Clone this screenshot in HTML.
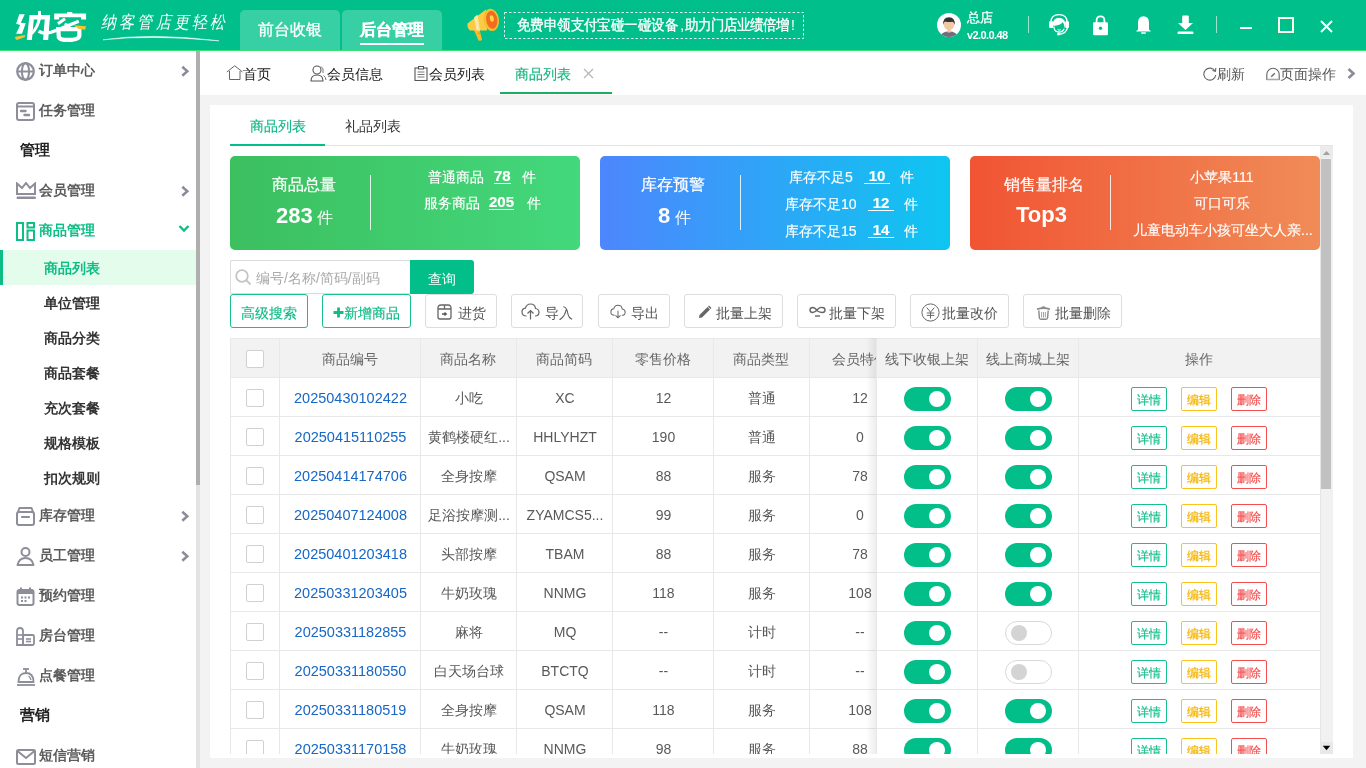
<!DOCTYPE html>
<html><head><meta charset="utf-8">
<style>
*{box-sizing:border-box;margin:0;padding:0}
html,body{width:1366px;height:768px;overflow:hidden;background:#f3f3f3;font-family:"Liberation Sans",sans-serif;color:#333}
.a{position:absolute}
#hdr{position:absolute;left:0;top:0;width:1366px;height:51px;background:#01bf8b;border-bottom:1px solid #3be07a}
.htab{position:absolute;top:10px;height:40px;width:100px;background:#37d0a4;border-radius:5px 5px 0 0;color:#fff;font-size:16px;text-align:center;line-height:40px;-webkit-text-stroke:0.3px #fff}
#side{position:absolute;left:0;top:51px;width:196px;height:717px;background:#fff;overflow:hidden}
#sbar{position:absolute;left:196px;top:51px;width:4px;height:717px;background:#afafaf}
.mt{font-size:14px;font-weight:bold;line-height:20px;white-space:nowrap}
.mh{font-size:15px;font-weight:bold;color:#222;line-height:22px}
#tabs{position:absolute;left:200px;top:51px;width:1166px;height:44px;background:#fff}
.tt{position:absolute;top:13px;line-height:20px;font-size:14px;color:#1a1a1a;white-space:nowrap}
#panel{position:absolute;left:210px;top:105px;width:1143px;height:653px;background:#fff;overflow:hidden}
.card{position:absolute;top:156px;width:350px;height:94px;border-radius:5px;color:#fff}
.ct{position:absolute;font-size:16px;line-height:20px;white-space:nowrap;-webkit-text-stroke:0.2px #fff}
.cs{position:absolute;font-size:14px;line-height:18px;white-space:nowrap;-webkit-text-stroke:0.15px #fff}
.cn{font-weight:bold;font-size:15px;display:inline-block;border-bottom:1.5px solid #fff;line-height:15px;text-align:center}
.btn{position:absolute;top:294px;height:34px;border:1px solid #ddd;border-radius:3px;font-size:14px;color:#555;line-height:32px;padding-top:2px;white-space:nowrap}
.btng{border-color:#17bf8c;color:#0fba86;-webkit-text-stroke:0.15px #0fba86}
.th{font-size:14px;color:#666;text-align:center;line-height:20px;white-space:nowrap}
.td{font-size:14px;color:#595959;text-align:center;line-height:20px;white-space:nowrap}
.lnk{color:#1667c6;font-size:14.5px}
.cb{width:18px;height:18px;border:1px solid #d0d0d0;border-radius:2px;background:#fff}
.tg{width:47px;height:24px;border-radius:12px;background:#02bf8a}
.tg i{position:absolute;left:25px;top:4px;width:16px;height:16px;border-radius:8px;background:#fff}
.tg.off{background:#fff;border:1px solid #d9d9d9}
.tg.off i{left:5px;top:3px;background:#d4d4d4}
.ab{width:36px;height:24px;border:1px solid;border-radius:2px;font-size:12px;text-align:center;line-height:23px;padding-top:1px;background:#fff;-webkit-text-stroke:0.2px currentColor}
</style></head><body><div id="root" style="position:absolute;left:0;top:0;width:1366px;height:768px;will-change:transform">
<div id="hdr">
  <svg class="a" style="left:0;top:0" width="100" height="50" viewBox="0 0 100 50">
    <g fill="#fff">
      <polygon points="19.32,14.15 24.77,14.15 20.78,22.64 25.76,23.34 21.96,33.77 16.10,33.77 20.20,24.98 16.10,23.81"/>
      <polygon points="29.57,15.03 50.07,15.03 50.07,19.42 33.79,19.42 31.91,39.92 26.76,39.92"/>
      <rect x="38.06" y="10.93" width="2.93" height="8.78"/>
      <polygon points="45.09,15.03 50.07,15.03 48.19,39.92 43.04,39.92"/>
      <polygon points="54.17,13.39 86.08,13.39 86.08,19.42 81.11,19.42 81.11,17.37 59.14,17.37 59.14,19.42 54.17,19.42"/>
      <rect x="67.05" y="11.98" width="5.27" height="2.34"/>
    </g>
    <g fill="none" stroke="#fff">
      <path d="M39.53 17.96 Q37.77 27.33 31.62 33.77" stroke-width="3"/>
      <path d="M38.65 31.13 Q44.80 35.53 56.51 30.25 L78.76 21.18" stroke-width="3.3"/>
      <path d="M57.97 23.81 L65.00 18.83" stroke-width="3"/>
      <path d="M58.27 29.08 L58.85 37.28 Q60.02 39.92 68.22 39.92 Q79.35 39.92 79.35 35.53 L79.35 29.08 Z" stroke-width="4.2"/>
      <path d="M64.71 23.81 L70.57 26.16" stroke-width="2.5"/>
    </g>
    <g fill="#fbc02d">
      <polygon points="15.22,36.70 25.47,34.94 24.59,37.28 16.69,39.92 15.22,38.45"/>
      <polygon points="73.49,25.28 86.08,26.16 85.21,29.79 78.76,29.08"/>
    </g>
  </svg>
  <div class="a" style="left:101px;top:11px;font-size:15px;color:#fff;line-height:20px;letter-spacing:3.2px;font-style:italic;font-family:'Liberation Serif',serif;white-space:nowrap;transform:scaleY(1.15);transform-origin:0 0">纳客管店更轻松</div>
  <svg class="a" style="left:100px;top:30px" width="125" height="14" viewBox="0 0 125 14"><path d="M3 9.8 Q50 2.5 119 10.8 Q50 4.6 3 9.8 Z" fill="#fff" stroke="#fff" stroke-width="0.5"/></svg>
  <div class="htab" style="left:240px">前台收银</div>
  <div class="htab" style="left:342px;font-weight:bold">后台管理<div class="a" style="left:18px;top:33px;width:64px;height:2px;background:#fff"></div></div>
  <svg class="a" style="left:460px;top:5px" width="45" height="40" viewBox="460 5 45 40">
    <path d="M473.5 29 L479.5 29.5 L482 39.5 Q481 41.5 478.5 40.5 Z" fill="#f8b92a"/>
    <path d="M478 33 L480.5 33.5" stroke="#f08a28" stroke-width="1"/>
    <path d="M467.5 23.5 Q467 28 470 30.5 L487 30.5 L486 9.5 Z" fill="#fbcb45"/>
    <path d="M474 17.5 L477.5 14.5 L480 30.5 L476.5 30.5 Z" fill="#fde7a6"/>
    <ellipse cx="491.3" cy="19.8" rx="7.6" ry="11.2" transform="rotate(-8 491.3 19.8)" fill="#f8bd2e"/>
    <ellipse cx="491.8" cy="19.8" rx="5.6" ry="9" transform="rotate(-8 491.8 19.8)" fill="#f46b1f"/>
    <ellipse cx="491.8" cy="18.5" rx="2" ry="3.2" transform="rotate(-8 491.8 18.5)" fill="#fcd54e"/>
  </svg>
  <svg class="a" style="left:504px;top:12px" width="300" height="27"><rect x="0.5" y="0.5" width="299" height="26" fill="none" stroke="rgba(255,255,255,0.85)" stroke-width="1" stroke-dasharray="2.5 2"/></svg>
  <div class="a" style="left:517px;top:15px;font-size:15px;color:#fff;line-height:20px;white-space:nowrap;letter-spacing:-0.1px;transform:scaleX(0.9);transform-origin:0 0;-webkit-text-stroke:0.35px #fff">免费申领支付宝碰一碰设备</div>
  <div class="a" style="left:680px;top:15px;font-size:15px;color:#fff;line-height:20px">,</div>
  <div class="a" style="left:685px;top:15px;font-size:15px;color:#fff;line-height:20px;white-space:nowrap;letter-spacing:-0.5px;transform:scaleX(0.9);transform-origin:0 0;-webkit-text-stroke:0.35px #fff">助力门店业绩倍增</div>
  <div class="a" style="left:791px;top:15px;font-size:14px;color:#fff;line-height:20px">!</div>
  <!-- avatar -->
  <svg class="a" style="left:937px;top:13px" width="24" height="24" viewBox="0 0 24 24">
    <circle cx="12" cy="12" r="12" fill="#fff"/>
    <clipPath id="cc"><circle cx="12" cy="12" r="12"/></clipPath>
    <g clip-path="url(#cc)">
      <path d="M2.5 26 Q3 18.5 12 18.5 Q21 18.5 21.5 26 Z" fill="#6e6e7e"/>
      <rect x="10.3" y="15" width="3.4" height="4.5" fill="#f2c49e"/>
      <ellipse cx="12" cy="11.8" rx="5.2" ry="5.2" fill="#f4c8a4"/>
      <path d="M6.3 12 Q5.5 4.3 12 4.3 Q18.3 4.3 17.7 12 Q17 9 15.5 8.8 Q12 9.5 8 8.6 Q6.8 9.5 6.3 12 Z" fill="#333"/>
    </g>
  </svg>
  <div class="a" style="left:967px;top:10px;font-size:13px;color:#fff;line-height:16px;-webkit-text-stroke:0.3px #fff">总店</div>
  <div class="a" style="left:967px;top:28px;font-size:11px;color:#fff;line-height:14px;font-weight:bold;letter-spacing:-0.6px">v2.0.0.48</div>
  <div class="a" style="left:1028px;top:16px;width:1px;height:17px;background:rgba(255,255,255,0.6)"></div>
  <!-- headset -->
  <svg class="a" style="left:1040px;top:8px" width="40" height="34" viewBox="1040 8 40 34">
    <path d="M1050.84 22.60 Q1050.84 14.64 1059.03 14.64 Q1067.21 14.64 1067.21 22.60" fill="none" stroke="#fff" stroke-width="1.4"/>
    <rect x="1049.07" y="21.27" width="4.20" height="6.64" rx="1" fill="#fff"/>
    <rect x="1065.22" y="21.27" width="3.76" height="6.64" rx="1" fill="#fff"/>
    <path d="M1052.83 23.93 Q1053.27 17.96 1059.03 17.96 Q1064.78 17.96 1065.44 23.93 L1064.78 28.80 Q1064.12 22.60 1062.35 22.16 Q1061.24 24.81 1054.60 25.70 Q1053.94 26.58 1054.16 27.47 Z" fill="#fff"/>
    <path d="M1053.94 27.03 Q1054.16 31.89 1059.03 32.12 Q1063.01 31.89 1064.12 28.80" fill="none" stroke="#fff" stroke-width="1.3"/>
    <path d="M1057.70 29.68 Q1059.03 30.57 1060.80 29.68" fill="none" stroke="#fff" stroke-width="1"/>
    <path d="M1067.43 27.47 Q1066.55 33.66 1059.03 34.33" fill="none" stroke="#fff" stroke-width="1.4"/>
    <circle cx="1058.58" cy="34.19" r="1.4" fill="#fff"/>
  </svg>
  <!-- lock -->
  <svg class="a" style="left:1092px;top:15px" width="17" height="21" viewBox="0 0 17 21">
    <path d="M4.6 8 L4.6 5.2 Q4.6 1.3 8.5 1.3 Q12.4 1.3 12.4 5.2 L12.4 8" fill="none" stroke="#fff" stroke-width="1.8"/>
    <rect x="1" y="7.2" width="15" height="13" rx="1.3" fill="#fff"/>
    <circle cx="8.5" cy="13.3" r="1.7" fill="#01bf8b"/>
  </svg>
  <!-- bell -->
  <svg class="a" style="left:1135px;top:15px" width="17" height="20" viewBox="0 0 17 20">
    <path d="M3 14.5 L3 8 Q3 1.2 8.5 1.2 Q14 1.2 14 8 L14 14.5 L16 16.6 L1 16.6 Z" fill="#fff"/>
    <rect x="6" y="17.2" width="5" height="1.6" rx="0.8" fill="#fff"/>
  </svg>
  <!-- download -->
  <svg class="a" style="left:1177px;top:15px" width="17" height="20" viewBox="0 0 17 20">
    <rect x="5.2" y="0.5" width="6.6" height="8" rx="1" fill="#fff"/>
    <path d="M1 8 L16 8 L8.5 15 Z" fill="#fff"/>
    <rect x="0.5" y="16.5" width="16" height="2.6" rx="1.2" fill="#fff"/>
  </svg>
  <div class="a" style="left:1216px;top:16px;width:1px;height:17px;background:rgba(255,255,255,0.6)"></div>
  <div class="a" style="left:1240px;top:27px;width:12px;height:2px;background:#fff"></div>
  <div class="a" style="left:1278px;top:17px;width:16px;height:16px;border:2.5px solid #fdfde8"></div>
  <svg class="a" style="left:1320px;top:20px" width="13" height="13" viewBox="0 0 13 13"><path d="M1 1 L12 12 M12 1 L1 12" stroke="#fff" stroke-width="2"/></svg>
</div>

<div id="side">
<svg class="a" style="left:16px;top:11px" width="20" height="20" viewBox="0 0 20 20"><circle cx="9.5" cy="9.5" r="8.3" fill="none" stroke="#8e8e9b" stroke-width="2.2"/><ellipse cx="9.5" cy="9.5" rx="3.6" ry="8.3" fill="none" stroke="#8e8e9b" stroke-width="2"/><line x1="1.5" y1="9.5" x2="17.5" y2="9.5" stroke="#8e8e9b" stroke-width="2"/></svg>
<div class="a mt" style="left:39px;top:9px;color:#5c5c5c">订单中心</div>
<svg class="a" style="left:179px;top:12px" width="12" height="16" viewBox="0 0 12 16"><path d="M3.3 3.8 L8.3 8.3 L3.3 12.8" fill="none" stroke="#8b8b99" stroke-width="2.5"/></svg>
<svg class="a" style="left:16px;top:51px" width="20" height="20" viewBox="0 0 20 20"><rect x="1" y="1" width="17" height="17" rx="2" fill="none" stroke="#8e8e9b" stroke-width="2"/><line x1="1" y1="4.5" x2="18" y2="4.5" stroke="#8e8e9b" stroke-width="2"/><line x1="5" y1="9" x2="9.5" y2="9" stroke="#8e8e9b" stroke-width="2.4" stroke-linecap="round"/><line x1="8.5" y1="13" x2="13" y2="13" stroke="#8e8e9b" stroke-width="2.4" stroke-linecap="round"/></svg>
<div class="a mt" style="left:39px;top:49px;color:#5c5c5c">任务管理</div>
<svg class="a" style="left:16px;top:131px" width="20" height="20" viewBox="0 0 20 20"><path d="M1 12 L1 1.5 L6 6 L10 1 L14 6 L19 1.5 L19 12 Z" fill="none" stroke="#8e8e9b" stroke-width="2" stroke-linejoin="miter"/><rect x="0.5" y="14.5" width="19.5" height="2.6" rx="1.3" fill="#8e8e9b"/></svg>
<div class="a mt" style="left:39px;top:129px;color:#5c5c5c">会员管理</div>
<svg class="a" style="left:179px;top:132px" width="12" height="16" viewBox="0 0 12 16"><path d="M3.3 3.8 L8.3 8.3 L3.3 12.8" fill="none" stroke="#8b8b99" stroke-width="2.5"/></svg>
<svg class="a" style="left:16px;top:171px" width="20" height="20" viewBox="0 0 20 20"><rect x="1" y="1" width="6" height="17" fill="none" stroke="#0fbd86" stroke-width="2"/><rect x="11.5" y="1" width="6.5" height="4.5" fill="none" stroke="#0fbd86" stroke-width="2"/><rect x="11.5" y="8.5" width="6.5" height="9.5" fill="none" stroke="#0fbd86" stroke-width="2"/></svg>
<div class="a mt" style="left:39px;top:169px;color:#0fbd86">商品管理</div>
<svg class="a" style="left:16px;top:456px" width="20" height="20" viewBox="0 0 20 20"><path d="M2 5 L3.5 1 L15.5 1 L17 5 Z" fill="none" stroke="#8e8e9b" stroke-width="2" stroke-linejoin="round"/><rect x="1" y="5" width="17" height="13" rx="2" fill="none" stroke="#8e8e9b" stroke-width="2"/><line x1="6" y1="10" x2="13" y2="10" stroke="#8e8e9b" stroke-width="2.2" stroke-linecap="round"/></svg>
<div class="a mt" style="left:39px;top:454px;color:#5c5c5c">库存管理</div>
<svg class="a" style="left:179px;top:457px" width="12" height="16" viewBox="0 0 12 16"><path d="M3.3 3.8 L8.3 8.3 L3.3 12.8" fill="none" stroke="#8b8b99" stroke-width="2.5"/></svg>
<svg class="a" style="left:16px;top:496px" width="20" height="20" viewBox="0 0 20 20"><circle cx="9.5" cy="5" r="4" fill="none" stroke="#8e8e9b" stroke-width="2"/><path d="M1.5 18 Q3 11 9.5 11 Q16 11 17.5 18 Z" fill="none" stroke="#8e8e9b" stroke-width="2" stroke-linejoin="round"/></svg>
<div class="a mt" style="left:39px;top:494px;color:#5c5c5c">员工管理</div>
<svg class="a" style="left:179px;top:497px" width="12" height="16" viewBox="0 0 12 16"><path d="M3.3 3.8 L8.3 8.3 L3.3 12.8" fill="none" stroke="#8b8b99" stroke-width="2.5"/></svg>
<svg class="a" style="left:16px;top:536px" width="20" height="20" viewBox="0 0 20 20"><rect x="1.5" y="3" width="16" height="15" rx="2" fill="none" stroke="#8e8e9b" stroke-width="2"/><rect x="1.5" y="3" width="16" height="4" fill="#8e8e9b"/><line x1="5" y1="0.5" x2="5" y2="4" stroke="#8e8e9b" stroke-width="2"/><line x1="14" y1="0.5" x2="14" y2="4" stroke="#8e8e9b" stroke-width="2"/><g fill="#8e8e9b"><rect x="5" y="9.5" width="2" height="2"/><rect x="8.5" y="9.5" width="2" height="2"/><rect x="12" y="9.5" width="2" height="2"/><rect x="5" y="13" width="2" height="2"/><rect x="8.5" y="13" width="2" height="2"/></g></svg>
<div class="a mt" style="left:39px;top:534px;color:#5c5c5c">预约管理</div>
<svg class="a" style="left:16px;top:576px" width="20" height="20" viewBox="0 0 20 20"><path d="M1 18 L1 4 Q1 1 4 1 Q7 1 7 4 L7 18 Z" fill="none" stroke="#8e8e9b" stroke-width="1.8"/><line x1="1" y1="8" x2="7" y2="8" stroke="#8e8e9b" stroke-width="1.6"/><line x1="1" y1="12" x2="7" y2="12" stroke="#8e8e9b" stroke-width="1.6"/><rect x="7" y="8" width="11" height="10" rx="1.5" fill="none" stroke="#8e8e9b" stroke-width="1.8"/><line x1="10" y1="12" x2="15" y2="12" stroke="#8e8e9b" stroke-width="1.6"/><line x1="10" y1="14.5" x2="15" y2="14.5" stroke="#8e8e9b" stroke-width="1.6"/></svg>
<div class="a mt" style="left:39px;top:574px;color:#5c5c5c">房台管理</div>
<svg class="a" style="left:16px;top:616px" width="20" height="20" viewBox="0 0 20 20"><path d="M2.5 15 Q2.5 6 10 6 Q17.5 6 17.5 15 Z" fill="none" stroke="#8e8e9b" stroke-width="1.8"/><line x1="7" y1="2" x2="13" y2="2" stroke="#8e8e9b" stroke-width="1.8"/><line x1="10" y1="2" x2="10" y2="6" stroke="#8e8e9b" stroke-width="1.8"/><line x1="1" y1="18" x2="19" y2="18" stroke="#8e8e9b" stroke-width="1.8"/><path d="M12.5 9 Q14.5 10.5 15 13" fill="none" stroke="#8e8e9b" stroke-width="1.4"/></svg>
<div class="a mt" style="left:39px;top:614px;color:#5c5c5c">点餐管理</div>
<svg class="a" style="left:16px;top:696px" width="20" height="20" viewBox="0 0 20 20"><rect x="1" y="3" width="18" height="14" rx="1.5" fill="none" stroke="#8e8e9b" stroke-width="2"/><path d="M1.5 4 L10 11 L18.5 4" fill="none" stroke="#8e8e9b" stroke-width="2"/></svg>
<div class="a mt" style="left:39px;top:694px;color:#5c5c5c">短信营销</div>
<svg class="a" style="left:178px;top:173px" width="12" height="9" viewBox="0 0 12 9"><path d="M1.5 2 L6 6.5 L10.5 2" fill="none" stroke="#0fbd86" stroke-width="2.4"/></svg>
<div class="a mh" style="left:20px;top:88px">管理</div>
<div class="a mh" style="left:20px;top:653px">营销</div>
<div class="a" style="left:0;top:199px;width:196px;height:35px;background:#e3fcec"></div>
<div class="a" style="left:0;top:199px;width:3px;height:35px;background:#0dbd86"></div>
<div class="a mt" style="left:44px;top:207px;color:#0fbd86">商品列表</div>
<div class="a mt" style="left:44px;top:242px;color:#333">单位管理</div>
<div class="a mt" style="left:44px;top:277px;color:#333">商品分类</div>
<div class="a mt" style="left:44px;top:312px;color:#333">商品套餐</div>
<div class="a mt" style="left:44px;top:347px;color:#333">充次套餐</div>
<div class="a mt" style="left:44px;top:382px;color:#333">规格模板</div>
<div class="a mt" style="left:44px;top:417px;color:#333">扣次规则</div>
</div>
<div id="sbar"></div><div class="a" style="left:196px;top:485px;width:4px;height:283px;background:#e3e3e3"></div>

<div id="tabs">
  <svg class="a" style="left:26px;top:14px" width="17" height="16" viewBox="0 0 17 16"><path d="M0.8 7 L8.7 0.8 L16.6 7 M3.5 6 V14.5 H14 V6" fill="none" stroke="#666" stroke-width="1"/></svg>
  <div class="tt" style="left:43px">首页</div>
  <svg class="a" style="left:110px;top:14px" width="17" height="17" viewBox="0 0 17 17"><circle cx="7" cy="5" r="4" fill="none" stroke="#555" stroke-width="1.1"/><path d="M1 16 Q1 10 7 10 Q13 10 13 16 Z" fill="none" stroke="#555" stroke-width="1.1"/><path d="M11 1.5 Q14 3 13 8 M13.5 10.5 Q16 12 16 15" fill="none" stroke="#777" stroke-width="1"/></svg>
  <div class="tt" style="left:127px">会员信息</div>
  <svg class="a" style="left:214px;top:15px" width="14" height="15" viewBox="0 0 14 15"><rect x="1" y="2" width="12" height="12.5" fill="none" stroke="#555" stroke-width="1.1"/><rect x="4.5" y="0.5" width="5" height="2.5" fill="#fff" stroke="#555" stroke-width="1"/><path d="M3.5 6 H10.5 M3.5 8.5 H10.5 M3.5 11 H10.5" stroke="#777" stroke-width="1"/></svg>
  <div class="tt" style="left:229px">会员列表</div>
  <div class="tt" style="left:315px;color:#14b47e;-webkit-text-stroke:0.15px #14b47e">商品列表</div>
  <svg class="a" style="left:383px;top:17px" width="11" height="11" viewBox="0 0 11 11"><path d="M1 1 L10 10 M10 1 L1 10" stroke="#b5b5b5" stroke-width="1.2"/></svg>
  <div class="a" style="left:300px;top:41px;width:112px;height:2px;background:#1dad62"></div>
  <svg class="a" style="left:1003px;top:16px" width="14" height="14" viewBox="0 0 14 14"><path d="M12 4 A6 6 0 1 0 12.8 8" fill="none" stroke="#666" stroke-width="1.1"/><path d="M9.5 3.5 L12.5 4.2 L12.8 1" fill="none" stroke="#666" stroke-width="1.1"/></svg>
  <div class="tt" style="left:1017px;color:#555">刷新</div>
  <svg class="a" style="left:1066px;top:16px" width="14" height="14" viewBox="0 0 14 14"><path d="M0.8 12.5 L0.8 7.5 A6.2 6.2 0 0 1 13.2 7.5 L13.2 12.5 Z" fill="none" stroke="#666" stroke-width="1.1"/><path d="M0.8 12.5 H13.2" stroke="#aaa" stroke-width="1.6"/><path d="M5.2 9.8 L8.8 6.2" stroke="#666" stroke-width="1.3"/></svg>
  <div class="tt" style="left:1080px;color:#555">页面操作</div>
  <svg class="a" style="left:1147px;top:17px" width="9" height="11" viewBox="0 0 9 11"><path d="M1.5 1 L6.5 5.5 L1.5 10" fill="none" stroke="#8b8b99" stroke-width="2.6"/></svg>
</div>

<div id="panel"></div>
<!-- inner tabs -->
<div class="a" style="left:250px;top:116px;font-size:14px;color:#0fb886;line-height:20px;-webkit-text-stroke:0.15px #0fb886">商品列表</div>
<div class="a" style="left:345px;top:116px;font-size:14px;color:#333;line-height:20px">礼品列表</div>
<div class="a" style="left:230px;top:145px;width:1103px;height:1px;background:#e4e4e4"></div>
<div class="a" style="left:230px;top:144px;width:95px;height:2px;background:#02bf8a"></div>

<!-- cards -->
<div class="card" style="left:230px;background:linear-gradient(to right,#3cbf5f,#43d87c)">
  <div class="ct" style="left:42px;top:19px">商品总量</div>
  <div class="a" style="left:46px;top:47px;white-space:nowrap;line-height:26px"><b style="font-size:22px">283</b> <span style="font-size:16px">件</span></div>
  <div class="a" style="left:140px;top:19px;width:1px;height:55px;background:rgba(255,255,255,0.85)"></div>
  <div class="cs" style="left:198px;top:12px">普通商品</div>
  <div class="cs" style="left:264px;top:11px"><span class="cn">78</span></div>
  <div class="cs" style="left:292px;top:12px">件</div>
  <div class="cs" style="left:194px;top:38px">服务商品</div>
  <div class="cs" style="left:259px;top:37px"><span class="cn">205</span></div>
  <div class="cs" style="left:297px;top:38px">件</div>
</div>
<div class="card" style="left:600px;background:linear-gradient(to right,#4d86fd,#0ec6f0)">
  <div class="ct" style="left:41px;top:19px">库存预警</div>
  <div class="a" style="left:58px;top:47px;white-space:nowrap;line-height:26px"><b style="font-size:22px">8</b> <span style="font-size:16px">件</span></div>
  <div class="a" style="left:140px;top:19px;width:1px;height:55px;background:rgba(255,255,255,0.85)"></div>
  <div class="cs" style="left:189px;top:12px">库存不足5</div>
  <div class="cs" style="left:264px;top:11px"><span class="cn" style="width:26px">10</span></div>
  <div class="cs" style="left:300px;top:12px">件</div>
  <div class="cs" style="left:185px;top:39px">库存不足10</div>
  <div class="cs" style="left:268px;top:38px"><span class="cn" style="width:26px">12</span></div>
  <div class="cs" style="left:304px;top:39px">件</div>
  <div class="cs" style="left:185px;top:66px">库存不足15</div>
  <div class="cs" style="left:268px;top:65px"><span class="cn" style="width:26px">14</span></div>
  <div class="cs" style="left:304px;top:66px">件</div>
</div>
<div class="card" style="left:970px;background:linear-gradient(to right,#f15433,#f08c58)">
  <div class="ct" style="left:34px;top:19px">销售量排名</div>
  <div class="a" style="left:46px;top:46px;white-space:nowrap;line-height:26px;font-size:22px;font-weight:bold">Top3</div>
  <div class="a" style="left:140px;top:19px;width:1px;height:55px;background:rgba(255,255,255,0.85)"></div>
  <div class="cs" style="left:0;width:350px;padding-left:154px;text-align:center;top:12px">小苹果111</div>
  <div class="cs" style="left:0;width:350px;padding-left:154px;text-align:center;top:38px">可口可乐</div>
  <div class="cs" style="left:163px;top:65px">儿童电动车小孩可坐大人亲...</div>
</div>

<!-- search -->
<div class="a" style="left:230px;top:260px;width:181px;height:34px;border:1px solid #dcdcdc;border-right:none;border-radius:2px 0 0 2px;background:#fff"></div>
<svg class="a" style="left:235px;top:269px" width="17" height="17" viewBox="0 0 17 17"><circle cx="7" cy="7" r="5.8" fill="none" stroke="#c4c4c4" stroke-width="1.8"/><path d="M11.2 11.2 L15.5 15.5" stroke="#c4c4c4" stroke-width="1.8"/></svg>
<div class="a" style="left:256px;top:268px;font-size:14px;color:#aaa;line-height:20px;white-space:nowrap">编号/名称/简码/副码</div>
<div class="a" style="left:410px;top:260px;width:64px;height:34px;background:#02bf8a;border-radius:0 3px 3px 0;color:#fff;font-size:14px;text-align:center;line-height:34px;padding-top:2px">查询</div>

<!-- buttons -->
<div class="btn btng" style="left:230px;width:78px;text-align:center">高级搜索</div>
<div class="btn btng" style="left:322px;width:89px;padding-left:21px">新增商品<svg class="a" style="left:10px;top:12px" width="11" height="11" viewBox="0 0 11 11"><path d="M0.5 5.5 H10.5 M5.5 0.5 V10.5" stroke="#0fbd86" stroke-width="2.8"/></svg></div>
<div class="btn" style="left:425px;width:72px;padding-left:32px">进货
  <svg class="a" style="left:10px;top:9px" width="17" height="16" viewBox="0 0 17 16"><path d="M2 4 L2 13 Q2 15 4 15 L13 15 Q15 15 15 13 L15 4 Q15 1 12 1 L5 1 Q2 1 2 4 Z" fill="none" stroke="#666" stroke-width="1.3"/><path d="M2 5 H15 M8.5 1 V5" stroke="#666" stroke-width="1.3"/><path d="M6 10 H10 M8.5 8.5 L10.3 10 L8.5 11.5" fill="none" stroke="#555" stroke-width="1.3"/></svg></div>
<div class="btn" style="left:511px;width:72px;padding-left:33px">导入
  <svg class="a" style="left:9px;top:8px" width="19" height="17" viewBox="0 0 19 17"><path d="M5.5 13 Q1 13 1 9 Q1 5.5 4.5 5.2 Q5.5 1 9.5 1 Q14 1 14.5 5.5 Q18 6 18 9.3 Q18 13 14 13" fill="none" stroke="#666" stroke-width="1.2"/><path d="M9.5 16.5 V8 M6.5 10.5 L9.5 7.5 L12.5 10.5" fill="none" stroke="#666" stroke-width="1.2"/></svg></div>
<div class="btn" style="left:598px;width:72px;padding-left:32px">导出
  <svg class="a" style="left:11px;top:9px" width="16" height="15" viewBox="0 0 19 17"><path d="M5.5 13 Q1 13 1 9 Q1 5.5 4.5 5.2 Q5.5 1 9.5 1 Q14 1 14.5 5.5 Q18 6 18 9.3 Q18 13 14 13" fill="none" stroke="#666" stroke-width="1.2"/><path d="M9.5 7.5 V16 M6.5 13 L9.5 16 L12.5 13" fill="none" stroke="#666" stroke-width="1.2"/></svg></div>
<div class="btn" style="left:684px;width:99px;padding-left:31px">批量上架
  <svg class="a" style="left:13px;top:10px" width="14" height="14" viewBox="0 0 14 14"><path d="M1 13 L1.5 10 L9.5 2 L12 4.5 L4 12.5 Z" fill="#666"/><path d="M10.5 1 L13 3.5" stroke="#666" stroke-width="1.5"/></svg></div>
<div class="btn" style="left:797px;width:99px;padding-left:31px">批量下架
  <svg class="a" style="left:11px;top:11px" width="17" height="12" viewBox="0 0 17 12"><path d="M8.5 5 Q6 1.5 3.8 1.5 Q1 1.5 1 4 Q1 6.5 3.8 6.5 Q6 6.5 8.5 3.5 Q11 0.8 13.2 1.5 Q16 1.5 16 4 Q16 6.5 13.2 6.5 Q11 6.5 8.5 5" fill="none" stroke="#666" stroke-width="1.4"/><path d="M6 10 H11" stroke="#666" stroke-width="1.4"/></svg></div>
<div class="btn" style="left:910px;width:99px;padding-left:31px">批量改价
  <svg class="a" style="left:10px;top:8px" width="19" height="19" viewBox="0 0 19 19"><circle cx="9.5" cy="9.5" r="8.6" fill="none" stroke="#666" stroke-width="1"/><path d="M5.8 4.6 L9.5 9.2 L13.2 4.6 M9.5 9.2 V15.5 M5.8 10 H13.2 M5.8 12.4 H13.2" fill="none" stroke="#666" stroke-width="1"/></svg></div>
<div class="btn" style="left:1023px;width:99px;padding-left:31px">批量删除
  <svg class="a" style="left:12px;top:11px" width="15" height="14" viewBox="0 0 15 14"><path d="M1 3.2 Q7.5 1 14 3.2" fill="none" stroke="#888" stroke-width="1.6"/><path d="M5.5 1.6 Q7.5 0 9.5 1.6" fill="none" stroke="#888" stroke-width="1.2"/><path d="M2.8 4.5 L3.4 12 Q3.6 13.2 5 13.2 L10 13.2 Q11.4 13.2 11.6 12 L12.2 4.5" fill="none" stroke="#888" stroke-width="1.4"/><path d="M5.6 6 V11.5 M7.5 6 V11.5 M9.4 6 V11.5" stroke="#999" stroke-width="0.9"/></svg></div>

<!-- table -->
<div class="a" style="left:230px;top:146px;width:1091px;height:608px;overflow:hidden">
<div class="a" style="left:-230px;top:-146px;width:1366px;height:768px">
<div class="a" style="left:230px;top:338px;width:1090px;height:39px;background:#f2f2f2"></div>
<div class="a" style="left:230px;top:338px;width:1090px;height:1px;background:#e8e8e8"></div>
<div class="a" style="left:230px;top:377px;width:1090px;height:1px;background:#e8e8e8"></div>
<div class="a" style="left:230px;top:416px;width:1090px;height:1px;background:#e8e8e8"></div>
<div class="a" style="left:230px;top:455px;width:1090px;height:1px;background:#e8e8e8"></div>
<div class="a" style="left:230px;top:494px;width:1090px;height:1px;background:#e8e8e8"></div>
<div class="a" style="left:230px;top:533px;width:1090px;height:1px;background:#e8e8e8"></div>
<div class="a" style="left:230px;top:572px;width:1090px;height:1px;background:#e8e8e8"></div>
<div class="a" style="left:230px;top:611px;width:1090px;height:1px;background:#e8e8e8"></div>
<div class="a" style="left:230px;top:650px;width:1090px;height:1px;background:#e8e8e8"></div>
<div class="a" style="left:230px;top:689px;width:1090px;height:1px;background:#e8e8e8"></div>
<div class="a" style="left:230px;top:728px;width:1090px;height:1px;background:#e8e8e8"></div>
<div class="a" style="left:230px;top:767px;width:1090px;height:1px;background:#e8e8e8"></div>
<div class="a" style="left:230px;top:338px;width:1px;height:420px;background:#e8e8e8"></div>
<div class="a" style="left:279px;top:338px;width:1px;height:420px;background:#e8e8e8"></div>
<div class="a" style="left:420px;top:338px;width:1px;height:420px;background:#e8e8e8"></div>
<div class="a" style="left:516px;top:338px;width:1px;height:420px;background:#e8e8e8"></div>
<div class="a" style="left:612px;top:338px;width:1px;height:420px;background:#e8e8e8"></div>
<div class="a" style="left:713px;top:338px;width:1px;height:420px;background:#e8e8e8"></div>
<div class="a" style="left:809px;top:338px;width:1px;height:420px;background:#e8e8e8"></div>
<div class="a cb" style="left:246px;top:350px"></div>
<div class="a th" style="left:279px;top:349px;width:141px">商品编号</div>
<div class="a th" style="left:420px;top:349px;width:96px">商品名称</div>
<div class="a th" style="left:516px;top:349px;width:96px">商品简码</div>
<div class="a th" style="left:612px;top:349px;width:101px">零售价格</div>
<div class="a th" style="left:713px;top:349px;width:96px">商品类型</div>
<div class="a th" style="left:809px;top:349px;width:102px">会员特价</div>
<div class="a cb" style="left:246px;top:389px"></div>
<div class="a td lnk" style="left:280px;top:388px;width:141px">20250430102422</div>
<div class="a td" style="left:421px;top:388px;width:96px">小吃</div>
<div class="a td" style="left:517px;top:388px;width:96px">XC</div>
<div class="a td" style="left:613px;top:388px;width:101px">12</div>
<div class="a td" style="left:714px;top:388px;width:96px">普通</div>
<div class="a td" style="left:809px;top:388px;width:102px">12</div>
<div class="a cb" style="left:246px;top:428px"></div>
<div class="a td lnk" style="left:280px;top:427px;width:141px">20250415110255</div>
<div class="a td" style="left:421px;top:427px;width:96px">黄鹤楼硬红...</div>
<div class="a td" style="left:517px;top:427px;width:96px">HHLYHZT</div>
<div class="a td" style="left:613px;top:427px;width:101px">190</div>
<div class="a td" style="left:714px;top:427px;width:96px">普通</div>
<div class="a td" style="left:809px;top:427px;width:102px">0</div>
<div class="a cb" style="left:246px;top:467px"></div>
<div class="a td lnk" style="left:280px;top:466px;width:141px">20250414174706</div>
<div class="a td" style="left:421px;top:466px;width:96px">全身按摩</div>
<div class="a td" style="left:517px;top:466px;width:96px">QSAM</div>
<div class="a td" style="left:613px;top:466px;width:101px">88</div>
<div class="a td" style="left:714px;top:466px;width:96px">服务</div>
<div class="a td" style="left:809px;top:466px;width:102px">78</div>
<div class="a cb" style="left:246px;top:506px"></div>
<div class="a td lnk" style="left:280px;top:505px;width:141px">20250407124008</div>
<div class="a td" style="left:421px;top:505px;width:96px">足浴按摩测...</div>
<div class="a td" style="left:517px;top:505px;width:96px">ZYAMCS5...</div>
<div class="a td" style="left:613px;top:505px;width:101px">99</div>
<div class="a td" style="left:714px;top:505px;width:96px">服务</div>
<div class="a td" style="left:809px;top:505px;width:102px">0</div>
<div class="a cb" style="left:246px;top:545px"></div>
<div class="a td lnk" style="left:280px;top:544px;width:141px">20250401203418</div>
<div class="a td" style="left:421px;top:544px;width:96px">头部按摩</div>
<div class="a td" style="left:517px;top:544px;width:96px">TBAM</div>
<div class="a td" style="left:613px;top:544px;width:101px">88</div>
<div class="a td" style="left:714px;top:544px;width:96px">服务</div>
<div class="a td" style="left:809px;top:544px;width:102px">78</div>
<div class="a cb" style="left:246px;top:584px"></div>
<div class="a td lnk" style="left:280px;top:583px;width:141px">20250331203405</div>
<div class="a td" style="left:421px;top:583px;width:96px">牛奶玫瑰</div>
<div class="a td" style="left:517px;top:583px;width:96px">NNMG</div>
<div class="a td" style="left:613px;top:583px;width:101px">118</div>
<div class="a td" style="left:714px;top:583px;width:96px">服务</div>
<div class="a td" style="left:809px;top:583px;width:102px">108</div>
<div class="a cb" style="left:246px;top:623px"></div>
<div class="a td lnk" style="left:280px;top:622px;width:141px">20250331182855</div>
<div class="a td" style="left:421px;top:622px;width:96px">麻将</div>
<div class="a td" style="left:517px;top:622px;width:96px">MQ</div>
<div class="a td" style="left:613px;top:622px;width:101px">--</div>
<div class="a td" style="left:714px;top:622px;width:96px">计时</div>
<div class="a td" style="left:809px;top:622px;width:102px">--</div>
<div class="a cb" style="left:246px;top:662px"></div>
<div class="a td lnk" style="left:280px;top:661px;width:141px">20250331180550</div>
<div class="a td" style="left:421px;top:661px;width:96px">白天场台球</div>
<div class="a td" style="left:517px;top:661px;width:96px">BTCTQ</div>
<div class="a td" style="left:613px;top:661px;width:101px">--</div>
<div class="a td" style="left:714px;top:661px;width:96px">计时</div>
<div class="a td" style="left:809px;top:661px;width:102px">--</div>
<div class="a cb" style="left:246px;top:701px"></div>
<div class="a td lnk" style="left:280px;top:700px;width:141px">20250331180519</div>
<div class="a td" style="left:421px;top:700px;width:96px">全身按摩</div>
<div class="a td" style="left:517px;top:700px;width:96px">QSAM</div>
<div class="a td" style="left:613px;top:700px;width:101px">118</div>
<div class="a td" style="left:714px;top:700px;width:96px">服务</div>
<div class="a td" style="left:809px;top:700px;width:102px">108</div>
<div class="a cb" style="left:246px;top:740px"></div>
<div class="a td lnk" style="left:280px;top:739px;width:141px">20250331170158</div>
<div class="a td" style="left:421px;top:739px;width:96px">牛奶玫瑰</div>
<div class="a td" style="left:517px;top:739px;width:96px">NNMG</div>
<div class="a td" style="left:613px;top:739px;width:101px">98</div>
<div class="a td" style="left:714px;top:739px;width:96px">服务</div>
<div class="a td" style="left:809px;top:739px;width:102px">88</div>
<div class="a" style="left:866px;top:338px;width:10px;height:420px;background:linear-gradient(to right,rgba(0,0,0,0),rgba(0,0,0,0.07))"></div>
<div class="a" style="left:876px;top:338px;width:444px;height:420px;background:#fff"></div>
<div class="a" style="left:876px;top:338px;width:444px;height:39px;background:#f2f2f2"></div>
<div class="a" style="left:876px;top:338px;width:444px;height:1px;background:#e8e8e8"></div>
<div class="a" style="left:876px;top:377px;width:444px;height:1px;background:#e8e8e8"></div>
<div class="a" style="left:876px;top:416px;width:444px;height:1px;background:#e8e8e8"></div>
<div class="a" style="left:876px;top:455px;width:444px;height:1px;background:#e8e8e8"></div>
<div class="a" style="left:876px;top:494px;width:444px;height:1px;background:#e8e8e8"></div>
<div class="a" style="left:876px;top:533px;width:444px;height:1px;background:#e8e8e8"></div>
<div class="a" style="left:876px;top:572px;width:444px;height:1px;background:#e8e8e8"></div>
<div class="a" style="left:876px;top:611px;width:444px;height:1px;background:#e8e8e8"></div>
<div class="a" style="left:876px;top:650px;width:444px;height:1px;background:#e8e8e8"></div>
<div class="a" style="left:876px;top:689px;width:444px;height:1px;background:#e8e8e8"></div>
<div class="a" style="left:876px;top:728px;width:444px;height:1px;background:#e8e8e8"></div>
<div class="a" style="left:876px;top:767px;width:444px;height:1px;background:#e8e8e8"></div>
<div class="a" style="left:876px;top:338px;width:1px;height:420px;background:#e8e8e8"></div>
<div class="a" style="left:977px;top:338px;width:1px;height:420px;background:#e8e8e8"></div>
<div class="a" style="left:1078px;top:338px;width:1px;height:420px;background:#e8e8e8"></div>
<div class="a" style="left:1320px;top:338px;width:1px;height:420px;background:#e8e8e8"></div>
<div class="a th" style="left:876px;top:349px;width:101px">线下收银上架</div>
<div class="a th" style="left:977px;top:349px;width:101px">线上商城上架</div>
<div class="a th" style="left:1078px;top:349px;width:242px">操作</div>
<div class="a tg" style="left:904px;top:387px"><i></i></div>
<div class="a tg" style="left:1005px;top:387px"><i></i></div>
<div class="a ab" style="left:1131px;top:387px;border-color:#17bf8c;color:#17bf8c">详情</div>
<div class="a ab" style="left:1181px;top:387px;border-color:#fcc31c;color:#f5b400">编辑</div>
<div class="a ab" style="left:1231px;top:387px;border-color:#f44e4e;color:#f44e4e">删除</div>
<div class="a tg" style="left:904px;top:426px"><i></i></div>
<div class="a tg" style="left:1005px;top:426px"><i></i></div>
<div class="a ab" style="left:1131px;top:426px;border-color:#17bf8c;color:#17bf8c">详情</div>
<div class="a ab" style="left:1181px;top:426px;border-color:#fcc31c;color:#f5b400">编辑</div>
<div class="a ab" style="left:1231px;top:426px;border-color:#f44e4e;color:#f44e4e">删除</div>
<div class="a tg" style="left:904px;top:465px"><i></i></div>
<div class="a tg" style="left:1005px;top:465px"><i></i></div>
<div class="a ab" style="left:1131px;top:465px;border-color:#17bf8c;color:#17bf8c">详情</div>
<div class="a ab" style="left:1181px;top:465px;border-color:#fcc31c;color:#f5b400">编辑</div>
<div class="a ab" style="left:1231px;top:465px;border-color:#f44e4e;color:#f44e4e">删除</div>
<div class="a tg" style="left:904px;top:504px"><i></i></div>
<div class="a tg" style="left:1005px;top:504px"><i></i></div>
<div class="a ab" style="left:1131px;top:504px;border-color:#17bf8c;color:#17bf8c">详情</div>
<div class="a ab" style="left:1181px;top:504px;border-color:#fcc31c;color:#f5b400">编辑</div>
<div class="a ab" style="left:1231px;top:504px;border-color:#f44e4e;color:#f44e4e">删除</div>
<div class="a tg" style="left:904px;top:543px"><i></i></div>
<div class="a tg" style="left:1005px;top:543px"><i></i></div>
<div class="a ab" style="left:1131px;top:543px;border-color:#17bf8c;color:#17bf8c">详情</div>
<div class="a ab" style="left:1181px;top:543px;border-color:#fcc31c;color:#f5b400">编辑</div>
<div class="a ab" style="left:1231px;top:543px;border-color:#f44e4e;color:#f44e4e">删除</div>
<div class="a tg" style="left:904px;top:582px"><i></i></div>
<div class="a tg" style="left:1005px;top:582px"><i></i></div>
<div class="a ab" style="left:1131px;top:582px;border-color:#17bf8c;color:#17bf8c">详情</div>
<div class="a ab" style="left:1181px;top:582px;border-color:#fcc31c;color:#f5b400">编辑</div>
<div class="a ab" style="left:1231px;top:582px;border-color:#f44e4e;color:#f44e4e">删除</div>
<div class="a tg" style="left:904px;top:621px"><i></i></div>
<div class="a tg off" style="left:1005px;top:621px"><i></i></div>
<div class="a ab" style="left:1131px;top:621px;border-color:#17bf8c;color:#17bf8c">详情</div>
<div class="a ab" style="left:1181px;top:621px;border-color:#fcc31c;color:#f5b400">编辑</div>
<div class="a ab" style="left:1231px;top:621px;border-color:#f44e4e;color:#f44e4e">删除</div>
<div class="a tg" style="left:904px;top:660px"><i></i></div>
<div class="a tg off" style="left:1005px;top:660px"><i></i></div>
<div class="a ab" style="left:1131px;top:660px;border-color:#17bf8c;color:#17bf8c">详情</div>
<div class="a ab" style="left:1181px;top:660px;border-color:#fcc31c;color:#f5b400">编辑</div>
<div class="a ab" style="left:1231px;top:660px;border-color:#f44e4e;color:#f44e4e">删除</div>
<div class="a tg" style="left:904px;top:699px"><i></i></div>
<div class="a tg" style="left:1005px;top:699px"><i></i></div>
<div class="a ab" style="left:1131px;top:699px;border-color:#17bf8c;color:#17bf8c">详情</div>
<div class="a ab" style="left:1181px;top:699px;border-color:#fcc31c;color:#f5b400">编辑</div>
<div class="a ab" style="left:1231px;top:699px;border-color:#f44e4e;color:#f44e4e">删除</div>
<div class="a tg" style="left:904px;top:738px"><i></i></div>
<div class="a tg" style="left:1005px;top:738px"><i></i></div>
<div class="a ab" style="left:1131px;top:738px;border-color:#17bf8c;color:#17bf8c">详情</div>
<div class="a ab" style="left:1181px;top:738px;border-color:#fcc31c;color:#f5b400">编辑</div>
<div class="a ab" style="left:1231px;top:738px;border-color:#f44e4e;color:#f44e4e">删除</div>
</div>
</div>
<!-- content scrollbar -->
<div class="a" style="left:1320px;top:146px;width:13px;height:608px;background:#f1f1f1;border-left:1px solid #e6e6e6"></div>
<div class="a" style="left:1320px;top:146px;width:13px;height:12px;background:#ebebeb"></div>
<div class="a" style="left:1320px;top:742px;width:13px;height:12px;background:#e8e8e8"></div>
<div class="a" style="left:1321px;top:159px;width:10px;height:330px;background:#c1c1c1"></div>
<svg class="a" style="left:1320px;top:148px" width="13" height="9" viewBox="0 0 13 9"><path d="M2.8 7 L6.5 3 L10.2 7 Z" fill="#a3a3a3"/></svg>
<svg class="a" style="left:1320px;top:744px" width="13" height="9" viewBox="0 0 13 9"><path d="M2.8 1.8 L6.5 6.3 L10.2 1.8 Z" fill="#000"/></svg>
</div></body></html>
